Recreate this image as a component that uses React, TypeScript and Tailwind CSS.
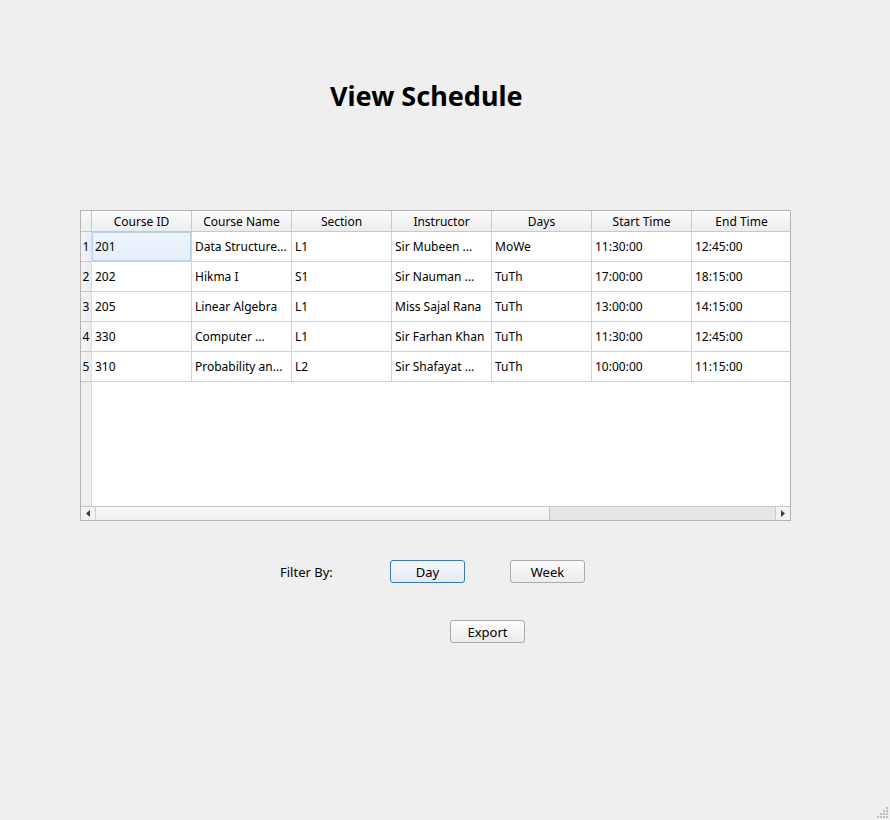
import React from "react";

const cols = ["Course ID", "Course Name", "Section", "Instructor", "Days", "Start Time", "End Time"];
const rows = [
  ["201", "Data Structure...", "L1", "Sir Mubeen ...", "MoWe", "11:30:00", "12:45:00"],
  ["202", "Hikma I", "S1", "Sir Nauman ...", "TuTh", "17:00:00", "18:15:00"],
  ["205", "Linear Algebra", "L1", "Miss Sajal Rana", "TuTh", "13:00:00", "14:15:00"],
  ["330", "Computer ...", "L1", "Sir Farhan Khan", "TuTh", "11:30:00", "12:45:00"],
  ["310", "Probability an...", "L2", "Sir Shafayat ...", "TuTh", "10:00:00", "11:15:00"],
];

function Btn({ label, active }: { label: string; active?: boolean }) {
  return (
    <div
      className={
        "w-[75px] h-[23px] rounded-[3px] border flex items-center justify-center pt-[2px] text-[13px] text-black " +
        (active
          ? "border-[#3b79b6] bg-gradient-to-b from-[#f4f8fc] to-[#e3ebf4]"
          : "border-[#ababab] bg-gradient-to-b from-[#fcfcfc] to-[#ececec]")
      }
    >
      {label}
    </div>
  );
}

export default function App() {
  return (
    <div
      className="w-[890px] h-[820px] bg-[#efefef] relative flex flex-col text-black overflow-hidden"
      style={{ fontFamily: '"Noto Sans", "Open Sans", sans-serif' }}
    >
      <div className="ml-[330px] mt-[77px] h-[37px] text-[27px] font-bold leading-[37px]">
        View Schedule
      </div>

      <div className="ml-[80px] mt-[96px] w-[711px] h-[311px] border border-[#b4b4b4] bg-white flex flex-col overflow-hidden text-[12px]">
        <div className="flex h-[21px] shrink-0">
          <div className="w-[11px] shrink-0 h-full border-r border-b border-[#c8c8c8] bg-gradient-to-b from-[#fafafa] to-[#ececec]" />
          {cols.map((c) => (
            <div
              key={c}
              className="w-[100px] shrink-0 h-full border-r border-b border-[#c8c8c8] bg-gradient-to-b from-[#fdfdfd] to-[#ececec] flex items-center justify-center leading-none pt-[2px]"
            >
              {c}
            </div>
          ))}
        </div>
        <div className="flex-1 flex">
          <div className="w-[11px] shrink-0 bg-[#efefef] border-r border-[#dcdcdc] flex flex-col">
            {rows.map((_, i) => (
              <div
                key={i}
                className="h-[30px] shrink-0 border-b border-[#c8c8c8] flex items-center justify-center bg-gradient-to-r from-[#f4f4f4] to-[#ececec]"
              >
                {i + 1}
              </div>
            ))}
          </div>
          <div className="flex flex-col">
            {rows.map((r, i) => (
              <div key={i} className="flex h-[30px] shrink-0">
                {r.map((v, j) => (
                  <div
                    key={j}
                    className={
                      "w-[100px] shrink-0 h-full border-r border-b border-[#d2d2d2] flex items-center pl-[3px] whitespace-nowrap overflow-hidden " +
                      (i === 0 && j === 0 ? "bg-gradient-to-b from-[#eef5fc] to-[#e2eef9] shadow-[inset_0_0_0_1px_#b9d2ea]" : "")
                    }
                  >
                    {v}
                  </div>
                ))}
              </div>
            ))}
          </div>
        </div>
        <div className="h-[14px] shrink-0 border-t border-[#c8c8c8] bg-[#e6e6e6] flex">
          <div className="w-[15px] h-full border-r border-[#d0d0d0] bg-[#f2f2f2] flex items-center justify-center">
            <svg width="4" height="7" viewBox="0 0 4 7">
              <path d="M4 0 L0 3.5 L4 7 Z" fill="#3c3c3c" />
            </svg>
          </div>
          <div className="w-[454px] h-full border-r border-[#c4c4c4] bg-gradient-to-b from-[#f8f8f8] to-[#efefef]" />
          <div className="flex-1" />
          <div className="w-[15px] h-full border-l border-[#d0d0d0] bg-[#f2f2f2] flex items-center justify-center">
            <svg width="4" height="7" viewBox="0 0 4 7">
              <path d="M0 0 L4 3.5 L0 7 Z" fill="#3c3c3c" />
            </svg>
          </div>
        </div>
      </div>

      <div className="ml-[280px] mt-[39px] flex items-center h-[23px] text-[13px]">
        <div className="w-[110px] pt-[2px]">Filter By:</div>
        <Btn label="Day" active />
        <div className="w-[45px]" />
        <Btn label="Week" />
      </div>

      <div className="ml-[450px] mt-[37px] flex">
        <Btn label="Export" />
      </div>

      <svg className="absolute right-[2px] bottom-[2px]" width="11" height="11" viewBox="0 0 11 11">
        {[
          [9, 0],
          [6, 3], [9, 3],
          [3, 6], [6, 6], [9, 6],
          [0, 9], [3, 9], [6, 9], [9, 9],
        ].map(([x, y], k) => (
          <rect key={k} x={x} y={y} width="2" height="2" fill="#bdbdbd" />
        ))}
      </svg>
    </div>
  );
}
